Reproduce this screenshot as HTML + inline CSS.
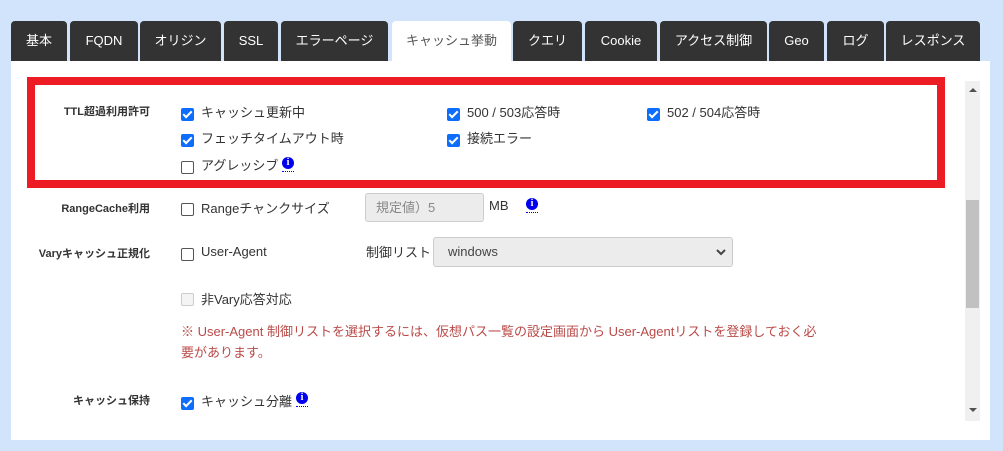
<!DOCTYPE html>
<html><head><meta charset="utf-8"><style>
*{box-sizing:border-box;margin:0;padding:0}
body{width:1003px;height:451px;background:#d2e3fc;font-family:"Liberation Sans","Noto Sans CJK JP",sans-serif;position:relative;overflow:hidden;color:#333}
.a{position:absolute}
.tab{position:absolute;top:21px;height:40px;background:#333;color:#fff;border-radius:4px 4px 0 0;font-size:13px;line-height:40px;text-align:center}
.tab.act{background:#fff;color:#555;height:41px}
.panel{position:absolute;left:11px;top:61px;width:979px;height:379px;background:#fff}
.lbl{position:absolute;font-size:11px;font-weight:bold;color:#333;text-align:right;width:140px;left:10px}
.cb{position:absolute;width:13px;height:13px;border-radius:2px}
.on{background:#0d6efd}
.on::after{content:"";position:absolute;left:4px;top:1px;width:3px;height:7px;border:solid #fff;border-width:0 2px 2px 0;transform:rotate(45deg)}
.off{border:1px solid #555;background:#fff}
.dis{border:1px solid #ccc;background:#f4f4f4}
.t{position:absolute;font-size:13px;color:#333;white-space:nowrap}
.info{position:absolute;width:12px;height:12px;border-radius:50%;background:#0000ee;color:#fff;font:bold 10px/12px "Liberation Serif",serif;text-align:center;border-bottom:0}
.info::after{content:"";position:absolute;left:0;top:14px;width:12px;border-top:1px dotted #0000ee}
</style></head><body>
<div class="tab" style="left:11px;width:56px">基本</div>
<div class="tab" style="left:70px;width:68px">FQDN</div>
<div class="tab" style="left:140px;width:81px">オリジン</div>
<div class="tab" style="left:224px;width:54px">SSL</div>
<div class="tab" style="left:281px;width:107px">エラーページ</div>
<div class="tab act" style="left:392px;width:119px">キャッシュ挙動</div>
<div class="tab" style="left:513px;width:69px">クエリ</div>
<div class="tab" style="left:585px;width:72px">Cookie</div>
<div class="tab" style="left:660px;width:107px">アクセス制御</div>
<div class="tab" style="left:769px;width:55px">Geo</div>
<div class="tab" style="left:827px;width:57px">ログ</div>
<div class="tab" style="left:886px;width:94px">レスポンス</div>
<div class="panel"></div>
<div class="a" style="left:27px;top:77px;width:918px;height:111px;border:8px solid #ed1c24"></div>
<div class="a" style="left:965px;top:81px;width:15px;height:340px;background:#f0f0f0"></div>
<div class="a" style="left:966px;top:200px;width:13px;height:108px;background:#c1c1c1"></div>
<div class="a" style="left:969px;top:88px;border:4px solid transparent;border-bottom:4px solid #505050;border-top:0"></div>
<div class="a" style="left:969px;top:408px;border:4px solid transparent;border-top:4px solid #505050;border-bottom:0"></div>

<div class="lbl" style="top:103px">TTL超過利用許可</div>
<div class="cb on" style="left:181px;top:108px"></div><div class="t" style="left:201px;top:102px">キャッシュ更新中</div>
<div class="cb on" style="left:447px;top:108px"></div><div class="t" style="left:467px;top:102px">500 / 503応答時</div>
<div class="cb on" style="left:647px;top:108px"></div><div class="t" style="left:667px;top:102px">502 / 504応答時</div>
<div class="cb on" style="left:181px;top:134px"></div><div class="t" style="left:201px;top:128px">フェッチタイムアウト時</div>
<div class="cb on" style="left:447px;top:134px"></div><div class="t" style="left:467px;top:128px">接続エラー</div>
<div class="cb off" style="left:181px;top:161px"></div><div class="t" style="left:201px;top:155px">アグレッシブ</div>
<div class="info" style="left:282px;top:157px">i</div>

<div class="lbl" style="top:200px">RangeCache利用</div>
<div class="cb off" style="left:181px;top:203px"></div><div class="t" style="left:201px;top:198px">Rangeチャンクサイズ</div>
<div class="a" style="left:365px;top:193px;width:119px;height:29px;background:#ececec;border:1px solid #ccc;border-radius:3px;font-size:13px;line-height:27px;padding-left:10px;color:#888">規定値）5</div>
<div class="t" style="left:489px;top:198px">MB</div>
<div class="info" style="left:526px;top:198px">i</div>

<div class="lbl" style="top:245px">Varyキャッシュ正規化</div>
<div class="cb off" style="left:181px;top:248px"></div><div class="t" style="left:201px;top:244px">User-Agent</div>
<div class="t" style="left:366px;top:242px">制御リスト</div>
<div class="a" style="left:433px;top:237px;width:300px;height:30px;background:#ececec;border:1px solid #ccc;border-radius:3px;font-size:13px;line-height:28px;padding-left:14px;color:#444">windows
<svg class="a" style="right:6px;top:10px" width="10" height="8" viewBox="0 0 10 8"><path d="M1 2l4 4 4-4" stroke="#444" stroke-width="2" fill="none"/></svg></div>
<div class="cb dis" style="left:181px;top:293px"></div><div class="t" style="left:201px;top:289px">非Vary応答対応</div>
<div class="t" style="left:181px;top:321px;color:#b94a48;line-height:21px;white-space:normal;width:636px">※ User-Agent 制御リストを選択するには、仮想パス一覧の設定画面から User-Agentリストを登録しておく必要があります。</div>

<div class="lbl" style="top:392px">キャッシュ保持</div>
<div class="cb on" style="left:181px;top:397px"></div><div class="t" style="left:201px;top:391px">キャッシュ分離</div>
<div class="info" style="left:296px;top:392px">i</div>
</body></html>
